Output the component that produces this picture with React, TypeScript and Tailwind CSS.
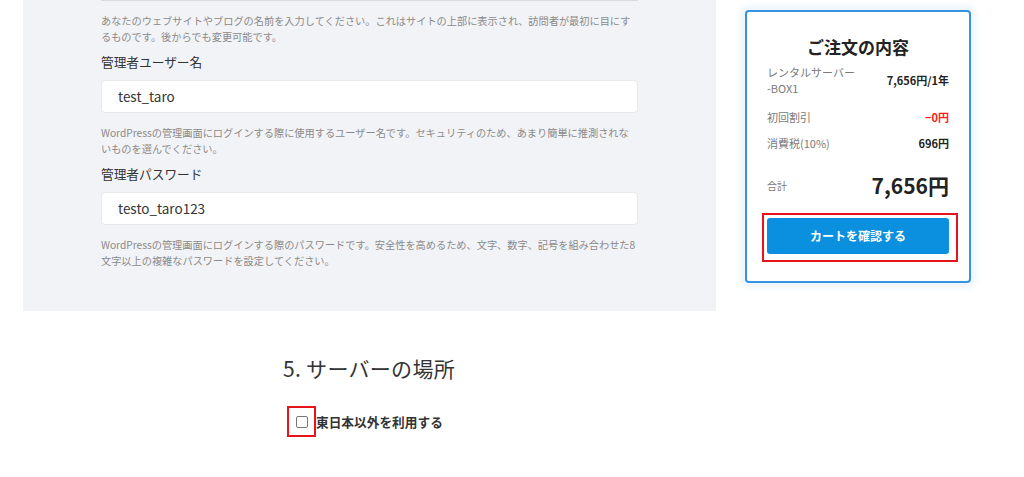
const font = { fontFamily: '"Noto Sans CJK JP", "Noto Sans", sans-serif' }

function HelpText({ lines }: { lines: string[] }) {
  return (
    <p className="text-[10.2px] leading-[16px] text-[#8a8a8a] whitespace-nowrap">
      {lines.map((l, i) => (
        <span key={i} className="block">{l}</span>
      ))}
    </p>
  )
}

function Field({ label, value }: { label: string; value: string }) {
  return (
    <>
      <label className="mt-[7px] block text-[12.7px] leading-[20px] text-[#333]">{label}</label>
      <div className="mt-[8px] h-[33px] w-full rounded-[4px] border border-[#e6e8ec] bg-white pl-[16px] flex items-center text-[13.5px] text-[#333]">
        {value}
      </div>
    </>
  )
}

function OrderCard() {
  return (
    <div className="ml-[29px] mt-[10px] w-[226px] h-[273px] shrink-0 rounded-[4px] border-2 border-[#3593e2] bg-white px-[20px] pt-[23px] shadow-[0_0_6px_5px_#eef5fc]">
      <h2 className="text-center text-[17px] leading-[24px] font-bold text-[#222]">ご注文の内容</h2>

      <div className="mt-[5px] flex items-center justify-between">
        <span className="text-[11px] leading-[16px] text-[#7a7a7a]">
          レンタルサーバー
          <br />
          -BOX1
        </span>
        <span className="text-[11px] font-bold text-[#222]">7,656円/1年</span>
      </div>

      <div className="mt-[13px] flex items-center justify-between text-[11px] leading-[16px]">
        <span className="text-[#7a7a7a]">初回割引</span>
        <span className="font-bold text-[#ff1a1a]">−0円</span>
      </div>

      <div className="mt-[10px] flex items-center justify-between text-[11px] leading-[16px]">
        <span className="text-[#7a7a7a]">消費税(10%)</span>
        <span className="font-bold text-[#222]">696円</span>
      </div>

      <div className="mt-[20px] flex items-center justify-between">
        <span className="text-[10px] text-[#7a7a7a]">合計</span>
        <span className="text-[21px] leading-[28px] font-bold text-[#222]">7,656円</span>
      </div>

      <div className="mt-[14px] ml-[-5px] mr-[-9px] border-2 border-[#e8141b] pl-[3px] pr-[7px] pt-[3px] pb-[6px]">
        <button className="h-[36px] w-full rounded-[3px] bg-[#0b8fdf] text-[12px] font-bold text-white">
          カートを確認する
        </button>
      </div>
    </div>
  )
}

export default function App() {
  return (
    <div className="min-h-[477px] w-[1024px] bg-white" style={font}>
      <div className="flex">
        <div className="ml-[23px] w-[693px] shrink-0">
          <section className="bg-[#f2f3f7] px-[78px] pb-[42px]">
            <div className="h-px w-full bg-[#d9dbe0]" />
            <div className="mt-[12px]">
              <HelpText
                lines={[
                  'あなたのウェブサイトやブログの名前を入力してください。これはサイトの上部に表示され、訪問者が最初に目にす',
                  'るものです。後からでも変更可能です。',
                ]}
              />
            </div>
            <Field label="管理者ユーザー名" value="test_taro" />
            <div className="mt-[12px]">
              <HelpText
                lines={[
                  'WordPressの管理画面にログインする際に使用するユーザー名です。セキュリティのため、あまり簡単に推測されな',
                  'いものを選んでください。',
                ]}
              />
            </div>
            <Field label="管理者パスワード" value="testo_taro123" />
            <div className="mt-[12px]">
              <HelpText
                lines={[
                  'WordPressの管理画面にログインする際のパスワードです。安全性を高めるため、文字、数字、記号を組み合わせた8',
                  '文字以上の複雑なパスワードを設定してください。',
                ]}
              />
            </div>
          </section>

          <div className="pl-[260px]">
            <h3 className="mt-[42px] text-[21px] leading-[30px] tracking-[0.3px] text-[#333]">5. サーバーの場所</h3>
            <div className="mt-[23px] flex items-center">
              <div className="ml-[4px] h-[31px] w-[29px] border-2 border-[#e8141b] pl-[7px] pt-[8px]">
                <div className="h-[12px] w-[12px] rounded-[2px] border border-[#777] bg-white" />
              </div>
              <span className="text-[12.7px] font-bold text-[#333]">東日本以外を利用する</span>
            </div>
          </div>
        </div>

        <OrderCard />
      </div>
    </div>
  )
}
